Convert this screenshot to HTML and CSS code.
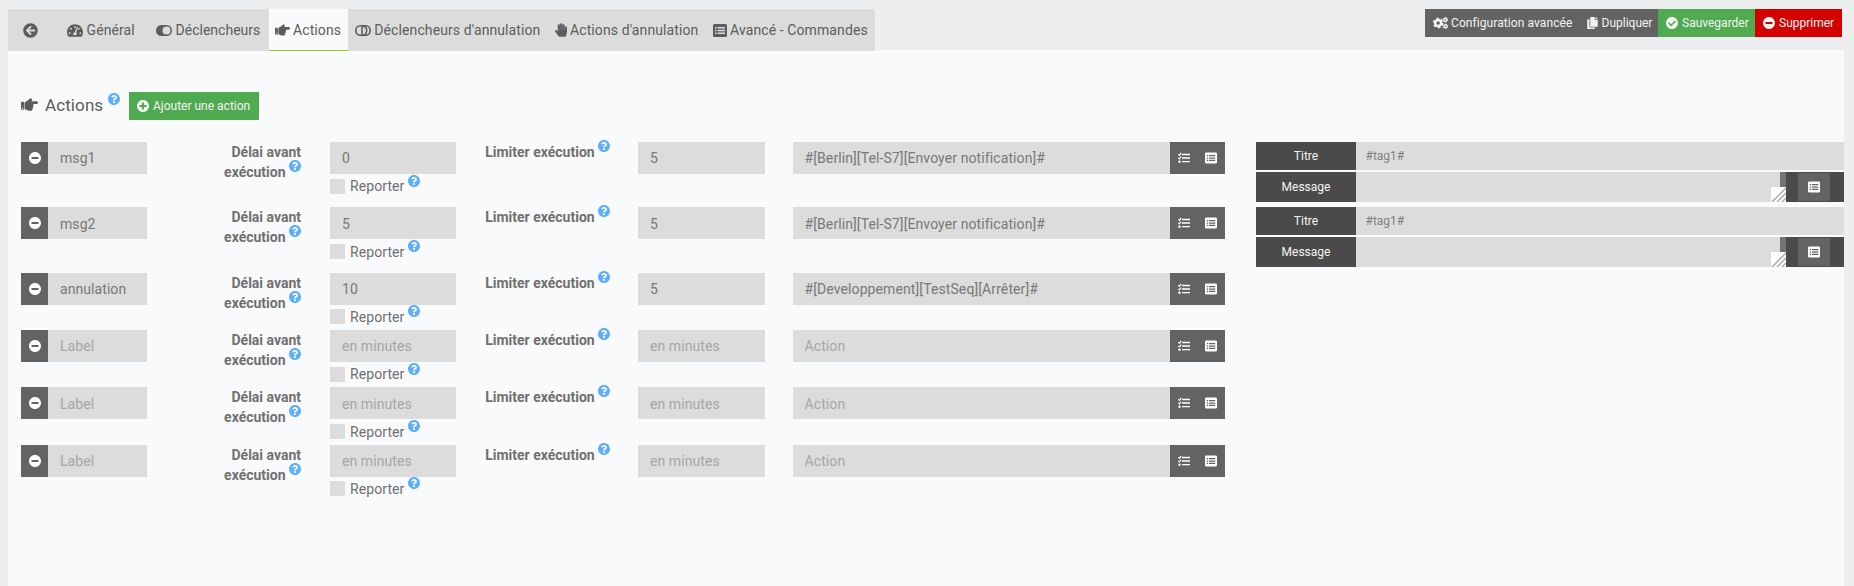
FILE: index.html
```
<!DOCTYPE html>
<html lang="fr">
<head>
<meta charset="utf-8">
<title>Actions</title>
<link rel="stylesheet" href="styles.css">
</head>
<body>
<svg class="sprite" aria-hidden="true">
<symbol id="back" viewBox="0 0 512 512"><path d="M256 504C119 504 8 393 8 256S119 8 256 8s248 111 248 248-111 248-248 248zm28.9-143.6L209.4 288H392c13.3 0 24-10.7 24-24v-16c0-13.3-10.7-24-24-24H209.4l75.5-72.4c9.7-9.3 9.9-24.8.4-34.3l-11-10.9c-9.4-9.4-24.6-9.4-33.9 0L107.7 239c-9.4 9.4-9.4 24.6 0 33.9l132.7 132.7c9.4 9.4 24.6 9.4 33.9 0l11-10.9c9.5-9.5 9.3-25-.4-34.3z"/></symbol>
<symbol id="gauge" viewBox="0 32 576 448"><path d="M288 32C128.94 32 0 160.94 0 320c0 52.8 14.25 102.26 39.06 144.8 5.61 9.62 16.3 15.2 27.44 15.2h443c11.14 0 21.83-5.58 27.44-15.2C561.75 422.26 576 372.8 576 320c0-159.06-128.94-288-288-288zm0 64c14.71 0 26.58 10.13 30.32 23.65-1.11 2.26-2.64 4.23-3.45 6.67l-9.22 27.67c-5.13 3.49-10.97 6.01-17.64 6.01-17.67 0-32-14.33-32-32S270.33 96 288 96zM96 384c-17.67 0-32-14.33-32-32s14.33-32 32-32 32 14.33 32 32-14.33 32-32 32zm48-160c-17.67 0-32-14.33-32-32s14.33-32 32-32 32 14.33 32 32-14.33 32-32 32zm246.77-72.41l-61.33 184C343.13 347.33 352 364.54 352 384c0 11.72-3.38 22.55-8.88 32H232.88c-5.5-9.45-8.88-20.28-8.88-32 0-33.94 26.5-61.43 59.9-63.59l61.34-184.01c4.17-12.56 17.73-19.45 30.36-15.17 12.57 4.19 19.35 17.79 15.17 30.36zm14.66 57.2l15.52-46.55c3.47-1.29 7.13-2.23 11.05-2.23 17.67 0 32 14.33 32 32s-14.33 32-32 32c-11.38-.01-20.89-6.28-26.57-15.22zM480 384c-17.67 0-32-14.33-32-32s14.33-32 32-32 32 14.33 32 32-14.33 32-32 32z"/></symbol>
<symbol id="toggle-on" viewBox="0 0 16 11"><path fill-rule="evenodd" d="M5.5 0h5a5.5 5.5 0 0 1 0 11h-5a5.5 5.5 0 0 1 0-11zM10.5 1.5a4 4 0 1 0 0 8a4 4 0 0 0 0-8z"/></symbol>
<symbol id="toggle-off" viewBox="0 0 16 11"><g fill="none" stroke="currentColor" stroke-width="1.6"><rect x=".8" y=".8" width="14.4" height="9.4" rx="4.7"/><path d="M7 .8a4.7 4.7 0 0 1 0 9.4M7 1.500v8"/></g></symbol>
<symbol id="point" viewBox="0 64 512 384"><path d="M512 199.652c0 23.625-20.65 43.826-44.8 43.826h-99.851c16.34 17.048 18.346 49.766-6.299 70.944 14.288 22.829 2.147 53.017-16.45 62.315C353.574 425.878 322.654 448 272 448c-2.746 0-13.276-.203-16-.195-61.971.168-76.894-31.065-123.731-38.315C120.596 407.683 112 397.599 112 385.786V214.261l.002-.001c.011-18.366 10.607-35.889 28.464-43.845 28.886-12.994 95.413-49.038 107.534-77.323 7.797-18.194 21.384-29.084 40-29.092 34.222-.014 57.752 35.098 44.119 66.908-3.583 8.359-8.312 16.67-14.153 24.918H467.2c23.45 0 44.8 20.543 44.8 43.826zM96 200v192c0 13.255-10.745 24-24 24H24c-13.255 0-24-10.745-24-24V200c0-13.255 10.745-24 24-24h48c13.255 0 24 10.745 24 24zM68 368c0-11.046-8.954-20-20-20s-20 8.954-20 20 8.954 20 20 20 20-8.954 20-20z"/></symbol>
<symbol id="hand" viewBox="0 0 448 512"><path d="M408.781 128.007C386.356 127.578 368 146.36 368 168.79V256h-8V79.79c0-22.43-18.356-41.212-40.781-40.783C297.488 39.423 280 57.169 280 79v177h-8V40.79C272 18.36 253.644-.422 231.219.007 209.488.423 192 18.169 192 40v216h-8V80.79c0-22.43-18.356-41.212-40.781-40.783C121.488 40.423 104 58.169 104 80v235.992l-31.648-43.519c-12.993-17.866-38.009-21.817-55.877-8.823-17.865 12.994-21.815 38.01-8.822 55.877l125.601 172.705A48 48 0 0 0 172.073 512h197.59c22.274 0 41.622-15.324 46.724-37.006l26.508-112.66a192.011 192.011 0 0 0 5.104-43.975V168c.001-21.831-17.487-39.577-39.218-39.993z"/></symbol>
<symbol id="list" viewBox="0 0 14 13"><path fill-rule="evenodd" d="M1.5 0h11A1.5 1.5 0 0 1 14 1.5v10a1.5 1.5 0 0 1-1.5 1.5h-11A1.5 1.5 0 0 1 0 11.500v-10A1.5 1.5 0 0 1 1.500 0zM2 3v1.500h1.500V3zM4.500 3v1.500H12V3zM2 5.800v1.500h1.500V5.800zM4.500 5.800v1.500H12V5.800zM2 8.600v1.500h1.500V8.600zM4.500 8.600v1.500H12V8.600z"/></symbol>
<symbol id="tasks" viewBox="0 0 12 12"><path d="M4 1.800h8v1.400H4zM4 5.300h8v1.400H4zM4 8.900h8v1.400H4z"/><path d="M.3 2.300l1 1L3.200 1M.3 5.900l1 1 1.900-2.300" fill="none" stroke="currentColor" stroke-width="1.200"/><circle cx="1.500" cy="9.700" r="1.200"/></symbol>
<symbol id="minus" viewBox="8 8 496 496"><path d="M256 8C119 8 8 119 8 256s111 248 248 248 248-111 248-248S393 8 256 8zM124 296c-6.6 0-12-5.4-12-12v-56c0-6.6 5.4-12 12-12h264c6.6 0 12 5.4 12 12v56c0 6.6-5.4 12-12 12z"/></symbol>
<symbol id="plus" viewBox="8 8 496 496"><path d="M256 8C119 8 8 119 8 256s111 248 248 248 248-111 248-248S393 8 256 8zm144 276c0 6.6-5.4 12-12 12h-92v92c0 6.6-5.4 12-12 12h-56c-6.6 0-12-5.4-12-12v-92h-92c-6.6 0-12-5.4-12-12v-56c0-6.6 5.4-12 12-12h92v-92c0-6.6 5.4-12 12-12h56c6.6 0 12 5.4 12 12v92h92c6.6 0 12 5.4 12 12z"/></symbol>
<symbol id="check" viewBox="8 8 496 496"><path d="M504 256c0 136.967-111.033 248-248 248S8 392.967 8 256 119.033 8 256 8s248 111.033 248 248zM227.314 387.314l184-184c6.248-6.248 6.248-16.379 0-22.627l-22.627-22.627c-6.248-6.249-16.379-6.249-22.628 0L216 308.118l-70.059-70.059c-6.248-6.248-16.379-6.248-22.628 0l-22.627 22.627c-6.248 6.248-6.248 16.379 0 22.627l104 104c6.249 6.249 16.379 6.249 22.628.001z"/></symbol>
<symbol id="help" viewBox="8 8 496 496"><path d="M504 256c0 136.997-111.043 248-248 248S8 392.997 8 256C8 119.083 119.043 8 256 8s248 111.083 248 248zM262.655 90c-54.497 0-89.255 22.957-116.549 63.758-3.536 5.286-2.353 12.415 2.715 16.258l34.699 26.31c5.205 3.947 12.621 3.008 16.665-2.122 17.864-22.658 30.113-35.797 57.303-35.797 20.429 0 45.698 13.148 45.698 32.958 0 14.976-12.363 22.667-32.534 33.976C247.128 238.528 216 254.941 216 296v4c0 6.627 5.373 12 12 12h56c6.627 0 12-5.373 12-12v-1.333c0-28.462 83.186-29.647 83.186-106.667 0-58.002-60.165-102-116.531-102zM256 338c-25.365 0-46 20.635-46 46 0 25.364 20.635 46 46 46s46-20.636 46-46c0-25.365-20.635-46-46-46z"/></symbol>
<symbol id="copy" viewBox="0 0 448 512"><path d="M320 448v40c0 13.255-10.745 24-24 24H24c-13.255 0-24-10.745-24-24V120c0-13.255 10.745-24 24-24h72v296c0 30.879 25.121 56 56 56zm0-344V0H152c-13.255 0-24 10.745-24 24v368c0 13.255 10.745 24 24 24h272c13.255 0 24-10.745 24-24V128H344c-13.2 0-24-10.8-24-24zm120.971-31.029L375.029 7.029A24 24 0 0 0 358.059 0H352v96h96v-6.059a24 24 0 0 0-7.029-16.97z"/></symbol>
<symbol id="cogs" viewBox="0 0 15 12"><g fill="none" stroke="currentColor"><circle cx="5.2" cy="6" r="3" stroke-width="2.6"/><circle cx="5.2" cy="6" r="4.6" stroke-width="1.400" stroke-dasharray="2.500 2.320"/><circle cx="12.400" cy="2.800" r="1.500" stroke-width="1.400"/><circle cx="12.400" cy="2.800" r="2.400" stroke-width=".8" stroke-dasharray="1.250 1.260"/><circle cx="12.400" cy="9.300" r="1.500" stroke-width="1.400"/><circle cx="12.400" cy="9.300" r="2.400" stroke-width=".8" stroke-dasharray="1.250 1.260"/></g></symbol>
</svg>

<header class="topbar">
  <nav class="tabs">
    <a class="tab tab-back"><svg class="i14"><use href="#back"/></svg></a>
    <a class="tab tab-general"><svg class="i-gauge"><use href="#gauge"/></svg>Général</a>
    <a class="tab tab-triggers"><svg class="i-toggle"><use href="#toggle-on"/></svg>Déclencheurs</a>
    <a class="tab tab-actions active"><svg class="i-point"><use href="#point"/></svg>Actions</a>
    <a class="tab tab-cancel-triggers"><svg class="i-toggle"><use href="#toggle-off"/></svg>Déclencheurs d'annulation</a>
    <a class="tab tab-cancel-actions"><svg class="i-hand"><use href="#hand"/></svg>Actions d'annulation</a>
    <a class="tab tab-advanced"><svg class="i-list"><use href="#list"/></svg>Avancé - Commandes</a>
  </nav>
  <div class="toolbar">
    <a class="btn btn-config"><svg class="i-cogs"><use href="#cogs"/></svg>Configuration avancée</a>
    <a class="btn btn-copy"><svg class="i-copy"><use href="#copy"/></svg>Dupliquer</a>
    <a class="btn btn-save"><svg class="i12"><use href="#check"/></svg>Sauvegarder</a>
    <a class="btn btn-delete"><svg class="i12"><use href="#minus"/></svg>Supprimer</a>
  </div>
</header>

<main class="panel">
  <div class="heading">
    <svg class="i-title"><use href="#point"/></svg>
    <h1>Actions</h1>
    <svg class="help"><use href="#help"/></svg>
    <a class="btn btn-add"><svg class="i12"><use href="#plus"/></svg>Ajouter une action</a>
  </div>

  <div class="row tall">
    <div class="name"><span class="square"><svg class="i12"><use href="#minus"/></svg></span><span class="field">msg1</span></div>
    <div class="delay-label">Délai avant exécution <svg class="help"><use href="#help"/></svg></div>
    <div class="delay"><div class="field">0</div><div class="report"><i class="box"></i>Reporter<svg class="help"><use href="#help"/></svg></div></div>
    <div class="limit-label">Limiter exécution <svg class="help"><use href="#help"/></svg></div>
    <div class="field">5</div>
    <div class="action"><span class="field">#[Berlin][Tel-S7][Envoyer notification]#</span><span class="picks"><svg class="i12"><use href="#tasks"/></svg><svg class="i12"><use href="#list"/></svg></span></div>
    <div class="options">
      <div class="opt"><span class="opt-label">Titre</span><span class="opt-value">#tag1#</span></div>
      <div class="opt message"><span class="opt-label">Message</span><span class="opt-value"></span><span class="grip"><svg viewBox="0 0 15 15"><path d="M1 15 15 1M6 15l9-9M11 15l4-4"/></svg></span><span class="side"><span class="pick"><svg class="i12"><use href="#list"/></svg></span></span></div>
    </div>
  </div>

  <div class="row tall">
    <div class="name"><span class="square"><svg class="i12"><use href="#minus"/></svg></span><span class="field">msg2</span></div>
    <div class="delay-label">Délai avant exécution <svg class="help"><use href="#help"/></svg></div>
    <div class="delay"><div class="field">5</div><div class="report"><i class="box"></i>Reporter<svg class="help"><use href="#help"/></svg></div></div>
    <div class="limit-label">Limiter exécution <svg class="help"><use href="#help"/></svg></div>
    <div class="field">5</div>
    <div class="action"><span class="field">#[Berlin][Tel-S7][Envoyer notification]#</span><span class="picks"><svg class="i12"><use href="#tasks"/></svg><svg class="i12"><use href="#list"/></svg></span></div>
    <div class="options">
      <div class="opt"><span class="opt-label">Titre</span><span class="opt-value">#tag1#</span></div>
      <div class="opt message"><span class="opt-label">Message</span><span class="opt-value"></span><span class="grip"><svg viewBox="0 0 15 15"><path d="M1 15 15 1M6 15l9-9M11 15l4-4"/></svg></span><span class="side"><span class="pick"><svg class="i12"><use href="#list"/></svg></span></span></div>
    </div>
  </div>

  <div class="row">
    <div class="name"><span class="square"><svg class="i12"><use href="#minus"/></svg></span><span class="field">annulation</span></div>
    <div class="delay-label">Délai avant exécution <svg class="help"><use href="#help"/></svg></div>
    <div class="delay"><div class="field">10</div><div class="report"><i class="box"></i>Reporter<svg class="help"><use href="#help"/></svg></div></div>
    <div class="limit-label">Limiter exécution <svg class="help"><use href="#help"/></svg></div>
    <div class="field">5</div>
    <div class="action"><span class="field">#[Developpement][TestSeq][Arrêter]#</span><span class="picks"><svg class="i12"><use href="#tasks"/></svg><svg class="i12"><use href="#list"/></svg></span></div>
  </div>

  <div class="row">
    <div class="name"><span class="square"><svg class="i12"><use href="#minus"/></svg></span><span class="field empty">Label</span></div>
    <div class="delay-label">Délai avant exécution <svg class="help"><use href="#help"/></svg></div>
    <div class="delay"><div class="field empty">en minutes</div><div class="report"><i class="box"></i>Reporter<svg class="help"><use href="#help"/></svg></div></div>
    <div class="limit-label">Limiter exécution <svg class="help"><use href="#help"/></svg></div>
    <div class="field empty">en minutes</div>
    <div class="action"><span class="field empty">Action</span><span class="picks"><svg class="i12"><use href="#tasks"/></svg><svg class="i12"><use href="#list"/></svg></span></div>
  </div>

  <div class="row">
    <div class="name"><span class="square"><svg class="i12"><use href="#minus"/></svg></span><span class="field empty">Label</span></div>
    <div class="delay-label">Délai avant exécution <svg class="help"><use href="#help"/></svg></div>
    <div class="delay"><div class="field empty">en minutes</div><div class="report"><i class="box"></i>Reporter<svg class="help"><use href="#help"/></svg></div></div>
    <div class="limit-label">Limiter exécution <svg class="help"><use href="#help"/></svg></div>
    <div class="field empty">en minutes</div>
    <div class="action"><span class="field empty">Action</span><span class="picks"><svg class="i12"><use href="#tasks"/></svg><svg class="i12"><use href="#list"/></svg></span></div>
  </div>

  <div class="row">
    <div class="name"><span class="square"><svg class="i12"><use href="#minus"/></svg></span><span class="field empty">Label</span></div>
    <div class="delay-label">Délai avant exécution <svg class="help"><use href="#help"/></svg></div>
    <div class="delay"><div class="field empty">en minutes</div><div class="report"><i class="box"></i>Reporter<svg class="help"><use href="#help"/></svg></div></div>
    <div class="limit-label">Limiter exécution <svg class="help"><use href="#help"/></svg></div>
    <div class="field empty">en minutes</div>
    <div class="action"><span class="field empty">Action</span><span class="picks"><svg class="i12"><use href="#tasks"/></svg><svg class="i12"><use href="#list"/></svg></span></div>
  </div>
</main>
</body>
</html>
```
FILE: styles.css
```
* { box-sizing: border-box; }
body {
  margin: 0;
  height: 586px;
  overflow: hidden;
  padding: 0 10px 0 8px;
  display: flex;
  flex-direction: column;
  background: #edeef0;
  color: #707070;
  font: 14px/20px Roboto, sans-serif;
}
.sprite { position: absolute; width: 0; height: 0; }
svg { flex: none; fill: currentColor; }

.i12 { width: 12px; height: 12px; }
.i14 { width: 15px; height: 15px; }
.i-gauge { width: 16px; height: 13px; }
.i-toggle { width: 16px; height: 11px; }
.i-point { width: 15px; height: 12px; }
.i-hand { width: 12px; height: 14px; }
.i-list { width: 14px; height: 13px; }
.i-cogs { width: 15px; height: 12px; }
.i-copy { width: 11px; height: 12px; }
.help { width: 12px; height: 12px; color: #5eaefc; }

.topbar {
  flex: none;
  height: 50px;
  padding-top: 9px;
  display: flex;
  justify-content: space-between;
  align-items: flex-start;
}
.tabs { display: flex; height: 42px; background: #dcdcdc; position: relative; }
.tab {
  display: flex;
  align-items: center;
  gap: 3px;
  padding-left: 7px;
  color: #5c5c5c;
  white-space: nowrap;
  letter-spacing: 0.1px;
}
.tab-back { width: 51px; padding-left: 15px; }
.tab-general { width: 89px; padding-left: 8px; gap: 3.500px; }
.tab-triggers { width: 121px; padding-left: 8px; letter-spacing: 0; gap: 3.600px; }
.tab-actions { width: 79px; padding-left: 6px; }
.tab-cancel-triggers { width: 200px; gap: 3.300px; }
.tab-cancel-actions { width: 158px; }
.tab-advanced { width: 169px; }
.tab.active { background: #f8fafc; box-shadow: inset 0 -1px #96c927; }

.toolbar { display: flex; padding-right: 2px; }
.btn {
  display: flex;
  align-items: center;
  gap: 4px;
  height: 28px;
  padding-left: 8px;
  background: #636363;
  color: #f4f4f4;
  font-size: 12px;
  white-space: nowrap;
}
.btn-config { width: 154px; gap: 3px; letter-spacing: 0.08px; }
.btn-copy { width: 79px; gap: 3.500px; }
.btn-save { width: 97px; background: #50aa50; }
.btn-delete { width: 87px; background: #d40000; }

.panel { flex: 1; padding-left: 13px; background: #f8fafc; }
.heading { display: flex; align-items: center; height: 28px; margin: 42px 0 22px; }
.i-title { width: 17px; height: 13px; margin: -4px 7px 0 0; color: #5c5c5c; }
.heading h1 { margin: -3px 5px 0 0; width: 58px; font-size: 17px; font-weight: 400; color: #5c5c5c; letter-spacing: 0.1px; }
.heading .help { margin: -14px 9px 0 0; }
.btn-add { width: 130px; background: #50aa50; }

.row {
  display: grid;
  grid-template-columns: 126px 183px 126px 182px 127px 460px 619px;
  align-items: start;
  height: 57.3px;
}
.row.tall { height: 65.4px; }
.name, .action { display: flex; }
.square, .picks {
  flex: none;
  height: 32px;
  display: flex;
  align-items: center;
  justify-content: center;
  background: #636363;
  color: #fff;
}
.square { width: 27px; }
.picks { width: 55px; gap: 15px; }
.field {
  flex: 1;
  height: 32px;
  padding: 6.2px 12px 0;
  background: #dcdcdc;
  color: #787878;
  white-space: nowrap;
  letter-spacing: 0.07px;
}
.action .field { padding-left: 11.500px; letter-spacing: 0.1px; }
.empty { color: #a6a6a6; }
.delay-label, .limit-label { font-weight: 700; }
.delay-label { padding: 0 29px 0 69px; text-align: right; }
.delay-label .help, .limit-label .help { vertical-align: 5px; margin-top: -5px; }
.limit-label { padding-left: 29.200px; white-space: nowrap; }
.report { display: flex; align-items: center; height: 20px; margin-top: 1.200px; padding-top: 2px; letter-spacing: 0.08px; }
.report .box { width: 15px; height: 15px; margin-right: 5px; background: #dcdcdc; }
.report .help { margin: -11px 0 0 3.400px; }
.action { padding-left: 28px; }

.options { padding-left: 31px; font-size: 12px; }
.opt { display: flex; height: 28px; margin-bottom: 2px; }
.opt.message { height: 30px; }
.opt-label {
  width: 100px;
  padding-top: 0.2px;
  display: flex;
  align-items: center;
  justify-content: center;
  background: #4a4a4a;
  color: #f4f4f4;
}
.opt-value { flex: 1; display: flex; align-items: center; padding: 0.2px 0 0 9.500px; background: #dcdcdc; color: #808080; }
.grip { width: 15px; height: 30px; padding-top: 15px; background: linear-gradient(90deg, #dcdcdc 9px, #737373 9px); }
.grip svg { display: block; width: 15px; height: 15px; background: #fff; stroke: #aaa; stroke-width: 1.5; fill: none; }
.side { width: 58px; padding: 1px 0 1px 12px; background: #4a4a4a; }
.pick { width: 32px; height: 28px; display: flex; align-items: center; justify-content: center; background: #636363; color: #fff; }
```
